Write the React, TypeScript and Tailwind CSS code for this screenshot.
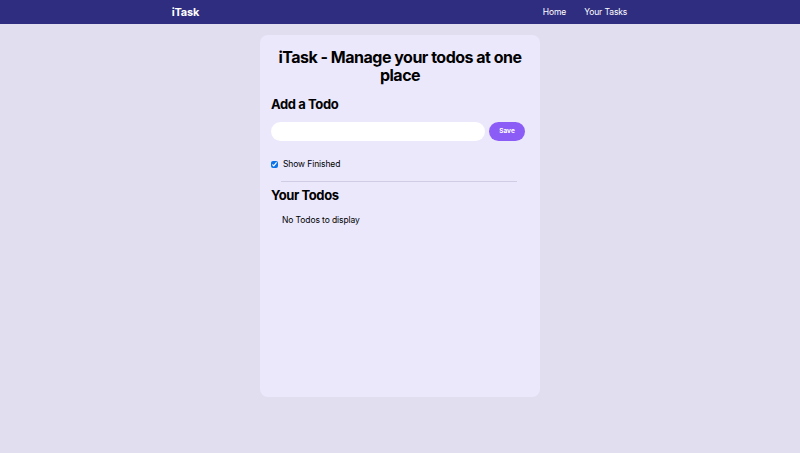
import { useState } from 'react'

function Navbar() {
  return (
    <nav className="flex justify-around items-center bg-[#2f2d80] text-white h-[24px]">
      <div className="font-bold text-[11px] tracking-[-0.2px]">iTask</div>
      <ul className="flex gap-[18px] text-[8.5px] tracking-[-0.1px] mr-[1px]">
        <li className="cursor-pointer">Home</li>
        <li className="cursor-pointer">Your Tasks</li>
      </ul>
    </nav>
  )
}

export default function App() {
  const [todo, setTodo] = useState('')
  const [todos, setTodos] = useState<{ id: number; todo: string; done: boolean }[]>([])
  const [showFinished, setShowFinished] = useState(true)

  const handleSave = () => {
    if (todo.trim().length <= 3) return
    setTodos([...todos, { id: Date.now(), todo, done: false }])
    setTodo('')
  }

  const visible = todos.filter((t) => showFinished || !t.done)

  return (
    <div className="min-h-[453px] bg-[#e1deef]" style={{ fontFamily: 'Inter, "Noto Sans", sans-serif' }}>
      <Navbar />
      <div className="mx-auto my-[11px] w-[280px] min-h-[362px] rounded-[8px] bg-[#ebe8fc] pl-[11px] pr-[15px] pt-[13px] pb-[9px]">
        <h1 className="text-center font-bold text-[16px] leading-[18px] tracking-[-0.5px] text-black ml-[2px] -mr-[2px]">
          iTask - Manage your todos at one place
        </h1>
        <div className="flex flex-col gap-[10px] mt-[12px]">
          <h2 className="font-bold text-[13px] leading-[16px] tracking-[-0.4px]">Add a Todo</h2>
          <div className="flex gap-[4px] items-center">
            <input
              value={todo}
              onChange={(e) => setTodo(e.target.value)}
              type="text"
              className="w-full h-[19px] rounded-full bg-white px-[8px] text-[9px] outline-none"
            />
            <button
              onClick={handleSave}
              className="h-[19px] w-[36px] shrink-0 rounded-full bg-[#8b5cf6] text-[6.5px] font-bold text-white"
            >
              Save
            </button>
          </div>
        </div>
        <label className="flex items-center gap-[5px] mt-[17px] text-[8.5px] leading-[12px] tracking-[-0.1px]">
          <input
            type="checkbox"
            checked={showFinished}
            onChange={() => setShowFinished(!showFinished)}
            className="w-[7px] h-[7px] m-0 accent-[#0b72e7]"
          />
          Show Finished
        </label>
        <div className="h-px bg-[#d0cce4] ml-[10px] w-[236px] mt-[11px]"></div>
        <h2 className="font-bold text-[13px] leading-[16px] tracking-[-0.4px] mt-[5px]">Your Todos</h2>
        <div className="mt-[11px]">
          {visible.length === 0 && (
            <div className="mx-[11px] text-[8.5px] leading-[12px] tracking-[-0.1px]">No Todos to display</div>
          )}
          {visible.map((item) => (
            <div key={item.id} className="flex justify-between my-[6px] text-[9px]">
              <div className="flex gap-[8px] items-center">
                <input
                  type="checkbox"
                  checked={item.done}
                  onChange={() =>
                    setTodos(todos.map((t) => (t.id === item.id ? { ...t, done: !t.done } : t)))
                  }
                />
                <span className={item.done ? 'line-through' : ''}>{item.todo}</span>
              </div>
              <button
                onClick={() => setTodos(todos.filter((t) => t.id !== item.id))}
                className="rounded-[4px] bg-[#8b5cf6] px-[6px] py-[2px] text-white font-bold"
              >
                Delete
              </button>
            </div>
          ))}
        </div>
      </div>
    </div>
  )
}
